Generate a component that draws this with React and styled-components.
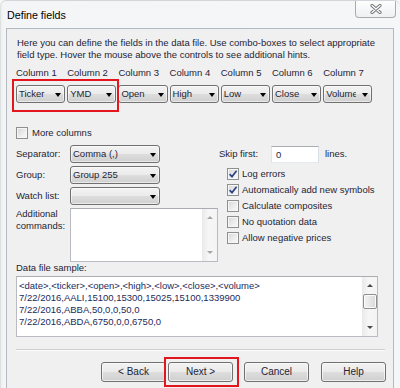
import React from 'react';
import styled, { createGlobalStyle } from 'styled-components';

const GlobalStyle = createGlobalStyle`
  html, body {
    margin: 0;
    padding: 0;
    width: 400px;
    height: 388px;
    overflow: hidden;
    background: #f7f8f6;
  }
  body {
    font-family: "Liberation Sans", Arial, sans-serif;
  }
  * { box-sizing: border-box; }
`;

const Window = styled.div`
  position: relative;
  width: 400px;
  height: 388px;
  display: flex;
  flex-direction: column;
  overflow: hidden;
  background: linear-gradient(to right, #eef0ea 0px, #f4f5f6 3px, #f5f6f7 100%);
  border-top-left-radius: 6px;
  border-top-right-radius: 6px;
  border-top: 1px solid #d2d6da;
  border-left: 1px solid #dde1e3;
`;

const TitleBar = styled.div`
  height: 27px;
  flex: none;
  display: flex;
  justify-content: space-between;
  align-items: flex-start;
`;

const Title = styled.div`
  margin: 8px 0 0 6px;
  font-size: 10.7px;
  line-height: 13px;
  color: #000;
`;

const CloseButton = styled.div`
  width: 41px;
  height: 18px;
  margin: -1px 4px 0 0;
  border: 1px solid #a8acb1;
  border-top: none;
  border-radius: 0 0 4px 4px;
  background: linear-gradient(#ffffff, #eef0f2);
  display: flex;
  align-items: center;
  justify-content: center;
`;

const Client = styled.div`
  flex: 1;
  margin: 0 6px 0 5px;
  border: 1px solid #b3b9c0;
  border-bottom: none;
  background: #f0f0f0;
  padding: 8px 8px 0 9px;
  font-size: 9.5px;
  line-height: 12px;
  color: #1e2436;
  display: flex;
  flex-direction: column;
`;

const Description = styled.div`
  margin-left: 1px;
  white-space: nowrap;
`;

const ColumnGrid = styled.div`
  position: relative;
  display: grid;
  grid-template-columns: repeat(7, 49.2px);
  column-gap: 2px;
  margin-top: ${p => p.$top}px;
`;

const ColumnLabel = styled.div`
  white-space: nowrap;
`;

const Combo = styled.div`
  display: flex;
  align-items: center;
  width: ${p => p.$w}px;
  height: 18px;
  border: 1px solid #707070;
  border-radius: 3px;
  background: linear-gradient(#f3f3f3 0%, #ebebeb 48%, #dddddd 52%, #d0d0d0 100%);
  box-shadow: inset 0 0 0 1px rgba(255, 255, 255, 0.55);
  color: #1e2436;
`;

const ComboText = styled.span`
  flex: 1;
  min-width: 0;
  padding-left: ${p => p.$pad}px;
  overflow: hidden;
  white-space: nowrap;
`;

const Arrow = styled.span`
  flex: none;
  width: 0;
  height: 0;
  margin: 1px ${p => p.$right}px 0 ${p => p.$left}px;
  border-left: 3px solid transparent;
  border-right: 3px solid transparent;
  border-top: 4px solid #000;
`;

const Highlight = styled.div`
  position: absolute;
  left: ${p => p.$left}px;
  top: ${p => p.$top}px;
  width: ${p => p.$w}px;
  height: ${p => p.$h}px;
  border: 2px solid #e3151d;
  pointer-events: none;
`;

const CheckRow = styled.label`
  display: flex;
  align-items: center;
  height: ${p => p.$h || 16}px;
  margin-top: ${p => p.$top || 0}px;
  white-space: nowrap;
`;

const Box = styled.span`
  flex: none;
  width: 12px;
  height: 12px;
  border: 1px solid #8e8f8f;
  background: linear-gradient(135deg, #d6d6d6 0%, #eeeeee 60%, #fbfbfb 100%);
  box-shadow: inset 0 0 0 1px #f6f6f6;
  margin-right: ${p => p.$gap}px;
  display: flex;
  align-items: center;
  justify-content: center;
`;

const Middle = styled.div`
  display: grid;
  grid-template-columns: 203px 1fr;
  margin-top: 6px;
`;

const FormGrid = styled.div`
  display: grid;
  grid-template-columns: 54px 90px;
  grid-auto-rows: auto;
  row-gap: 3px;
  align-items: center;
`;

const FieldLabel = styled.div`
  align-self: ${p => (p.$top ? 'start' : 'center')};
  white-space: nowrap;
`;

const TextArea = styled.div`
  grid-column: 2;
  width: 148px;
  height: 54px;
  border: 1px solid #b8bcc2;
  border-top-color: #a9adb3;
  background: #fff;
  display: flex;
  justify-content: flex-end;
`;

const ScrollBar = styled.div`
  width: 15px;
  flex: none;
  display: flex;
  flex-direction: column;
  align-items: center;
  justify-content: space-between;
  background: linear-gradient(to right, #ececec, #f6f6f6 40%, #f4f4f4);
  border-left: 1px solid #eaeaea;
`;

const ScrollArrow = styled.div`
  width: 100%;
  height: 17px;
  display: flex;
  align-items: center;
  justify-content: center;
  &::before {
    content: '';
    width: 0;
    height: 0;
    border-left: 3px solid transparent;
    border-right: 3px solid transparent;
    ${p => (p.$up ? 'border-bottom' : 'border-top')}: 3px solid ${p => (p.$disabled ? '#a6a6a6' : '#4a4a4a')};
  }
`;

const Thumb = styled.div`
  width: 14px;
  height: 15px;
  border: 1px solid #8e8e8e;
  border-radius: 2px;
  background: linear-gradient(to right, #f3f3f3, #e6e6e6 50%, #d9d9d9);
  box-shadow: inset 0 0 0 1px #fbfbfb;
`;

const ScrollTrack = styled.div`
  flex: 1;
  width: 100%;
  display: flex;
  flex-direction: column;
  align-items: center;
`;

const RightCol = styled.div`
  display: flex;
  flex-direction: column;
`;

const SkipRow = styled.div`
  display: flex;
  align-items: center;
  height: 18px;
`;

const SkipLabel = styled.span`
  width: 52px;
`;

const Input = styled.div`
  width: 48px;
  height: 17px;
  border: 1px solid #abadb3;
  border-bottom-color: #e3e9ef;
  border-left-color: #e2e3ea;
  border-right-color: #dbdfe6;
  background: #fff;
  padding: 1px 0 0 4px;
  line-height: 14px;
`;

const Lines = styled.span`
  margin-left: 6px;
`;

const CheckList = styled.div`
  display: flex;
  flex-direction: column;
  margin: 3px 0 0 8px;
`;

const SampleLabel = styled.div`
  margin-top: 0px;
`;

const SampleBox = styled.div`
  width: 362px;
  height: 61px;
  margin-top: 2px;
  border: 1px solid #b8bcc2;
  border-top-color: #abadb3;
  background: #fff;
  display: flex;
`;

const SampleText = styled.div`
  flex: 1;
  padding: 3px 0 0 2px;
  color: #1c2b5a;
  white-space: nowrap;
  overflow: hidden;
`;

const Separator = styled.div`
  margin-top: 12px;
  height: 2px;
  border-top: 1px solid #cdcdcd;
  border-bottom: 1px solid #fdfdfd;
`;

const ButtonRow = styled.div`
  display: flex;
  justify-content: flex-end;
  margin-top: 11px;
  margin-right: -1px;
`;

const ButtonSlot = styled.div`
  position: relative;
  margin-left: ${p => p.$gap}px;
`;

const Button = styled.div`
  width: 65px;
  height: 20px;
  border: 1px solid #707070;
  border-radius: 3px;
  background: linear-gradient(#f2f2f2 0%, #ebebeb 48%, #dddddd 52%, #cfcfcf 100%);
  box-shadow: inset 0 0 0 1px rgba(252, 252, 252, 0.7);
  display: flex;
  align-items: center;
  justify-content: center;
  color: #1e2436;
  font-size: 10px;
`;

const Check = () => (
  <svg width="10" height="10" viewBox="0 0 10 10">
    <path d="M1.6 5.2 L4 7.6 L8.6 1.8" fill="none" stroke="#2c4684" strokeWidth="1.7" />
  </svg>
);

const CheckBox = ({ checked, gap, children, h, top }) => (
  <CheckRow $h={h} $top={top}>
    <Box $gap={gap}>{checked && <Check />}</Box>
    <span>{children}</span>
  </CheckRow>
);

const Select = ({ w, value, pad, left, right }) => (
  <Combo $w={w}>
    <ComboText $pad={pad}>{value}</ComboText>
    <Arrow $left={left} $right={right} />
  </Combo>
);

export default function App() {
  const columns = ['Ticker', 'YMD', 'Open', 'High', 'Low', 'Close', 'Volume'];
  const sample = [
    '<date>,<ticker>,<open>,<high>,<low>,<close>,<volume>',
    '7/22/2016,AALI,15100,15300,15025,15100,1339900',
    '7/22/2016,ABBA,50,0,0,50,0',
    '7/22/2016,ABDA,6750,0,0,6750,0',
  ];
  return (
    <>
      <GlobalStyle />
      <Window>
        <TitleBar>
          <Title>Define fields</Title>
          <CloseButton>
            <svg width="12" height="10" viewBox="0 0 12 10">
              <path d="M2 1.5 L10 8.5 M10 1.5 L2 8.5" stroke="#707478" strokeWidth="3.2" strokeLinecap="round" />
              <path d="M2 1.5 L10 8.5 M10 1.5 L2 8.5" stroke="#ffffff" strokeWidth="1.3" strokeLinecap="round" />
            </svg>
          </CloseButton>
        </TitleBar>
        <Client>
          <Description>
            Here you can define the fields in the data file. Use combo-boxes to select appropriate
            <br />
            field type. Hover the mouse above the controls to see additional hints.
          </Description>
          <ColumnGrid $top={6}>
            {columns.map((c, i) => (
              <ColumnLabel key={c}>Column {i + 1}</ColumnLabel>
            ))}
          </ColumnGrid>
          <ColumnGrid $top={6}>
            {columns.map(c => (
              <Select key={c} w={49.2} value={c} pad={2} left={6} right={3} />
            ))}
            <Highlight $left={-4} $top={-6} $w={107} $h={33} />
          </ColumnGrid>
          <CheckBox gap={4} h={12} top={24}>More columns</CheckBox>
          <Middle>
            <FormGrid>
              <FieldLabel>Separator:</FieldLabel>
              <Select w={90} value="Comma (,)" pad={2} left={4} right={3} />
              <FieldLabel>Group:</FieldLabel>
              <Select w={90} value="Group 255" pad={2} left={4} right={3} />
              <FieldLabel>Watch list:</FieldLabel>
              <Select w={90} value="" pad={2} left={4} right={3} />
              <FieldLabel $top>
                Additional
                <br />
                commands:
              </FieldLabel>
              <TextArea>
                <ScrollBar>
                  <ScrollArrow $up $disabled />
                  <ScrollArrow $disabled />
                </ScrollBar>
              </TextArea>
            </FormGrid>
            <RightCol>
              <SkipRow>
                <SkipLabel>Skip first:</SkipLabel>
                <Input>0</Input>
                <Lines>lines.</Lines>
              </SkipRow>
              <CheckList>
                <CheckBox gap={3} checked>Log errors</CheckBox>
                <CheckBox gap={3} checked>Automatically add new symbols</CheckBox>
                <CheckBox gap={3}>Calculate composites</CheckBox>
                <CheckBox gap={3}>No quotation data</CheckBox>
                <CheckBox gap={3}>Allow negative prices</CheckBox>
              </CheckList>
            </RightCol>
          </Middle>
          <SampleLabel>Data file sample:</SampleLabel>
          <SampleBox>
            <SampleText>
              {sample.map(line => (
                <div key={line}>{line}</div>
              ))}
            </SampleText>
            <ScrollBar>
              <ScrollTrack>
                <ScrollArrow $up />
                <Thumb />
              </ScrollTrack>
              <ScrollArrow />
            </ScrollBar>
          </SampleBox>
          <Separator />
          <ButtonRow>
            <ButtonSlot $gap={0}>
              <Button>&lt; Back</Button>
            </ButtonSlot>
            <ButtonSlot $gap={2}>
              <Button>Next &gt;</Button>
              <Highlight $left={-4} $top={-5} $w={75} $h={30} />
            </ButtonSlot>
            <ButtonSlot $gap={11}>
              <Button>Cancel</Button>
            </ButtonSlot>
            <ButtonSlot $gap={12}>
              <Button>Help</Button>
            </ButtonSlot>
          </ButtonRow>
        </Client>
      </Window>
    </>
  );
}
